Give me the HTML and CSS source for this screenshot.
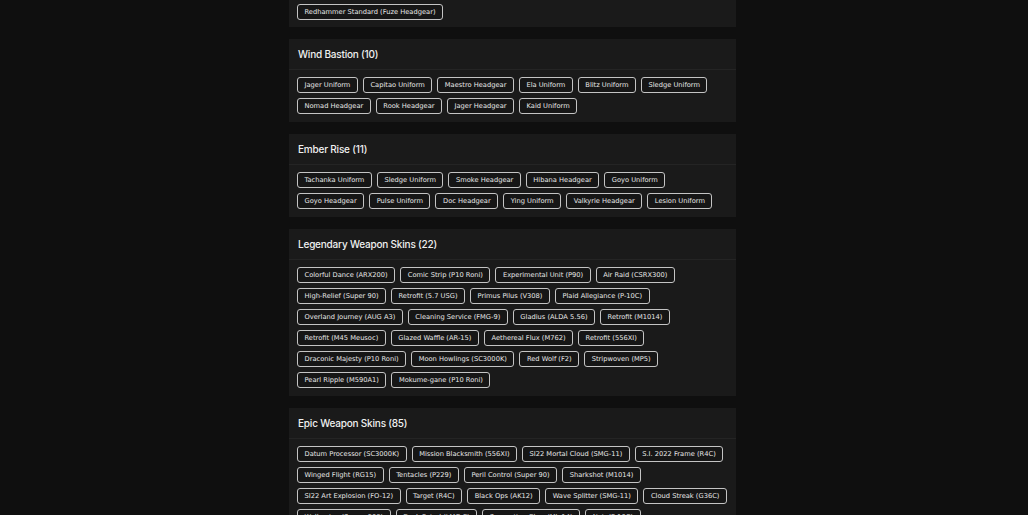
FILE: index.html
```html
<!DOCTYPE html>
<html lang="en">
<head>
  <meta charset="UTF-8">
  <meta name="viewport" content="width=device-width, initial-scale=1.0">
  <title>Skins</title>
  <link rel="stylesheet" href="styles.css">
</head>
<body>
  <div class="wrap">
    <div class="card card-cut">
      <div class="tags">
        <span class="tag">Redhammer Standard (Fuze Headgear)</span>
      </div>
    </div>

    <div class="card">
      <div class="card-head">Wind Bastion (10)</div>
      <div class="tags">
        <span class="tag">Jager Uniform</span>
        <span class="tag">Capitao Uniform</span>
        <span class="tag">Maestro Headgear</span>
        <span class="tag">Ela Uniform</span>
        <span class="tag">Blitz Uniform</span>
        <span class="tag">Sledge Uniform</span>
        <span class="tag">Nomad Headgear</span>
        <span class="tag">Rook Headgear</span>
        <span class="tag">Jager Headgear</span>
        <span class="tag">Kaid Uniform</span>
      </div>
    </div>

    <div class="card">
      <div class="card-head">Ember Rise (11)</div>
      <div class="tags">
        <span class="tag">Tachanka Uniform</span>
        <span class="tag">Sledge Uniform</span>
        <span class="tag">Smoke Headgear</span>
        <span class="tag">Hibana Headgear</span>
        <span class="tag">Goyo Uniform</span>
        <span class="tag">Goyo Headgear</span>
        <span class="tag">Pulse Uniform</span>
        <span class="tag">Doc Headgear</span>
        <span class="tag">Ying Uniform</span>
        <span class="tag">Valkyrie Headgear</span>
        <span class="tag">Lesion Uniform</span>
      </div>
    </div>

    <div class="card">
      <div class="card-head">Legendary Weapon Skins (22)</div>
      <div class="tags">
        <span class="tag">Colorful Dance (ARX200)</span>
        <span class="tag">Comic Strip (P10 Roni)</span>
        <span class="tag">Experimental Unit (P90)</span>
        <span class="tag">Air Raid (CSRX300)</span>
        <span class="tag">High-Relief (Super 90)</span>
        <span class="tag">Retrofit (5.7 USG)</span>
        <span class="tag">Primus Pilus (V308)</span>
        <span class="tag">Plaid Allegiance (P-10C)</span>
        <span class="tag">Overland Journey (AUG A3)</span>
        <span class="tag">Cleaning Service (FMG-9)</span>
        <span class="tag">Gladius (ALDA 5.56)</span>
        <span class="tag">Retrofit (M1014)</span>
        <span class="tag">Retrofit (M45 Meusoc)</span>
        <span class="tag">Glazed Waffle (AR-15)</span>
        <span class="tag">Aethereal Flux (M762)</span>
        <span class="tag">Retrofit (556XI)</span>
        <span class="tag">Draconic Majesty (P10 Roni)</span>
        <span class="tag">Moon Howlings (SC3000K)</span>
        <span class="tag">Red Wolf (F2)</span>
        <span class="tag">Stripwoven (MP5)</span>
        <span class="tag">Pearl Ripple (M590A1)</span>
        <span class="tag">Mokume-gane (P10 Roni)</span>
      </div>
    </div>

    <div class="card">
      <div class="card-head">Epic Weapon Skins (85)</div>
      <div class="tags">
        <span class="tag">Datum Processor (SC3000K)</span>
        <span class="tag">Mission Blacksmith (556XI)</span>
        <span class="tag">SI22 Mortal Cloud (SMG-11)</span>
        <span class="tag">S.I. 2022 Frame (R4C)</span>
        <span class="tag">Winged Flight (RG15)</span>
        <span class="tag">Tentacles (P229)</span>
        <span class="tag">Peril Control (Super 90)</span>
        <span class="tag">Sharkshot (M1014)</span>
        <span class="tag">SI22 Art Explosion (FO-12)</span>
        <span class="tag">Target (R4C)</span>
        <span class="tag">Black Ops (AK12)</span>
        <span class="tag">Wave Splitter (SMG-11)</span>
        <span class="tag">Cloud Streak (G36C)</span>
        <span class="tag">Wellspring (Spear .308)</span>
        <span class="tag">Dusk Patrol (LMG-E)</span>
        <span class="tag">Serpentine Glow (Mk 14)</span>
        <span class="tag">Noir (P-10C)</span>
      </div>
    </div>
  </div>
</body>
</html>
```

FILE: styles.css
```css
*{
  margin:0;
  padding:0;
  box-sizing:border-box;
}
body{
  background:#0f0f0f;
  color:#e6e6e6;
  font-family:"DejaVu Sans","Liberation Sans",sans-serif;
  overflow:hidden;
}
.wrap{
  width:447px;
  margin-left:calc(50% - 225px);
  display:flex;
  flex-direction:column;
  gap:12px;
}
.card{
  background:#1a1a1a;
}
.card-head{
  height:31px;
  padding:0 9px;
  display:flex;
  align-items:center;
  font-family:Inter,"DejaVu Sans",sans-serif;
  font-size:10px;
  font-weight:500;
  letter-spacing:-0.2px;
  color:#f0f0f0;
  border-bottom:1px solid #242424;
}
.tags{
  display:flex;
  flex-wrap:wrap;
  gap:5px;
  padding:7px 8px 8px;
}
.card-cut .tags{
  padding:4px 8px 7px;
}
.tag{
  display:inline-flex;
  align-items:center;
  height:16px;
  padding:0 6.5px;
  font-size:6.7px;
  color:#e8e8e8;
  background:#161616;
  border:1px solid #c4c4c4;
  border-radius:3px;
  white-space:nowrap;
}
```
